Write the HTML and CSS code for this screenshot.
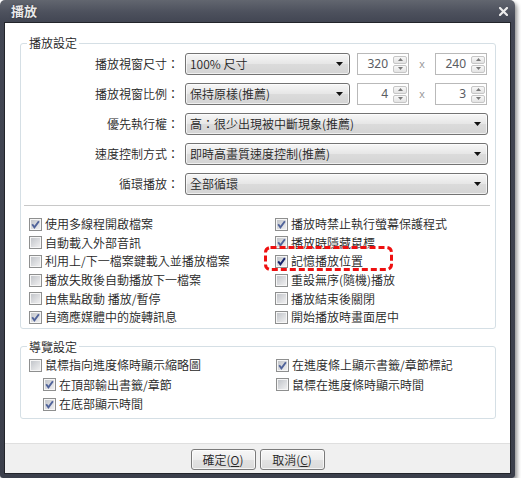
FILE: index.html
```html
<!DOCTYPE html>
<html lang="zh-Hant">
<head>
<meta charset="utf-8">
<title>播放</title>
<link rel="stylesheet" href="styles.css">
</head>
<body>
<svg class="defs" width="0" height="0" aria-hidden="true">
  <defs>
    <linearGradient id="cbfill" x1="0" y1="0" x2="1" y2="1">
      <stop offset="0" stop-color="#c2c5ca"/>
      <stop offset="1" stop-color="#efeff0"/>
    </linearGradient>
    <symbol id="cb-off" viewBox="0 0 13 13">
      <rect x="0.5" y="0.5" width="12" height="12" fill="#f6f6f6" stroke="#8e8f8f"/>
      <rect x="2" y="2" width="9" height="9" fill="url(#cbfill)"/>
    </symbol>
    <symbol id="cb-on" viewBox="0 0 13 13">
      <use href="#cb-off"/>
      <path d="M3.2 6.3 L5.4 9.3 L9.9 3.2" fill="none" stroke="#50639a" stroke-width="1.9"/>
    </symbol>
    <symbol id="cb-focus" viewBox="0 0 13 13">
      <use href="#cb-off"/>
      <path d="M3.2 6.3 L5.4 9.3 L9.9 3.2" fill="none" stroke="#17246c" stroke-width="2"/>
    </symbol>
    <symbol id="dd" viewBox="0 0 7 4">
      <path d="M0 0 H7 L3.5 4 Z" fill="#111"/>
    </symbol>
    <symbol id="up" viewBox="0 0 5 3">
      <path d="M0 3 H5 L2.5 0 Z" fill="#7a7a7a"/>
    </symbol>
    <symbol id="down" viewBox="0 0 5 3">
      <path d="M0 0 H5 L2.5 3 Z" fill="#7a7a7a"/>
    </symbol>
  </defs>
</svg>

<div class="window">
  <div class="titlebar">
    <span class="title">播放</span>
    <svg class="close" width="9" height="9" viewBox="0 0 9 9"><path d="M1 1 L8 8 M8 1 L1 8" stroke="#ececec" stroke-width="2.2" stroke-linecap="square"/></svg>
  </div>

  <div class="client">
    <fieldset class="group g1">
      <legend>播放設定</legend>
      <div class="form">
        <div class="frow">
          <span class="flabel">播放視窗尺寸：</span>
          <div class="fctl">
            <div class="combo short"><span>100% 尺寸</span><svg class="arrow"><use href="#dd"/></svg></div>
            <div class="spin first"><span class="num">320</span><span class="sbs"><span class="sb"><svg class="sa"><use href="#up"/></svg></span><span class="sb"><svg class="sa"><use href="#down"/></svg></span></span></div>
            <span class="times">x</span>
            <div class="spin"><span class="num">240</span><span class="sbs"><span class="sb"><svg class="sa"><use href="#up"/></svg></span><span class="sb"><svg class="sa"><use href="#down"/></svg></span></span></div>
          </div>
        </div>
        <div class="frow">
          <span class="flabel">播放視窗比例：</span>
          <div class="fctl">
            <div class="combo short"><span>保持原樣(推薦)</span><svg class="arrow"><use href="#dd"/></svg></div>
            <div class="spin first"><span class="num">4</span><span class="sbs"><span class="sb"><svg class="sa"><use href="#up"/></svg></span><span class="sb"><svg class="sa"><use href="#down"/></svg></span></span></div>
            <span class="times">x</span>
            <div class="spin"><span class="num">3</span><span class="sbs"><span class="sb"><svg class="sa"><use href="#up"/></svg></span><span class="sb"><svg class="sa"><use href="#down"/></svg></span></span></div>
          </div>
        </div>
        <div class="frow">
          <span class="flabel">優先執行權：</span>
          <div class="fctl"><div class="combo"><span>高：很少出現被中斷現象(推薦)</span><svg class="arrow"><use href="#dd"/></svg></div></div>
        </div>
        <div class="frow">
          <span class="flabel">速度控制方式：</span>
          <div class="fctl"><div class="combo"><span>即時高畫質速度控制(推薦)</span><svg class="arrow"><use href="#dd"/></svg></div></div>
        </div>
        <div class="frow">
          <span class="flabel">循環播放：</span>
          <div class="fctl"><div class="combo"><span>全部循環</span><svg class="arrow"><use href="#dd"/></svg></div></div>
        </div>
      </div>

      <div class="sep"></div>

      <div class="checks c1">
        <div class="chk"><svg class="cb"><use href="#cb-on"/></svg><span>使用多線程開啟檔案</span></div>
        <div class="chk"><svg class="cb"><use href="#cb-on"/></svg><span>播放時禁止執行螢幕保護程式</span></div>
        <div class="chk"><svg class="cb"><use href="#cb-off"/></svg><span>自動載入外部音訊</span></div>
        <div class="chk"><svg class="cb"><use href="#cb-on"/></svg><span>播放時隱藏鼠標</span></div>
        <div class="chk"><svg class="cb"><use href="#cb-off"/></svg><span>利用上/下一檔案鍵載入並播放檔案</span></div>
        <div class="chk marked"><svg class="cb"><use href="#cb-focus"/></svg><span>記憶播放位置</span>
          <svg class="ring" width="129" height="25" viewBox="0 0 129 25"><rect x="1.5" y="1.5" width="126" height="22" rx="5" fill="none" stroke="#ee1010" stroke-width="3" stroke-dasharray="6 3"/></svg>
        </div>
        <div class="chk"><svg class="cb"><use href="#cb-off"/></svg><span>播放失敗後自動播放下一檔案</span></div>
        <div class="chk"><svg class="cb"><use href="#cb-off"/></svg><span>重設無序(隨機)播放</span></div>
        <div class="chk"><svg class="cb"><use href="#cb-off"/></svg><span>由焦點啟動 播放/暫停</span></div>
        <div class="chk"><svg class="cb"><use href="#cb-off"/></svg><span>播放結束後關閉</span></div>
        <div class="chk"><svg class="cb"><use href="#cb-on"/></svg><span>自適應媒體中的旋轉訊息</span></div>
        <div class="chk"><svg class="cb"><use href="#cb-off"/></svg><span>開始播放時畫面居中</span></div>
      </div>
    </fieldset>

    <fieldset class="group g2">
      <legend>導覽設定</legend>
      <div class="checks c2">
        <div class="chk"><svg class="cb"><use href="#cb-off"/></svg><span>鼠標指向進度條時顯示縮略圖</span></div>
        <div class="chk"><svg class="cb"><use href="#cb-on"/></svg><span>在進度條上顯示書籤/章節標記</span></div>
        <div class="chk indent"><svg class="cb"><use href="#cb-on"/></svg><span>在頂部輸出書籤/章節</span></div>
        <div class="chk"><svg class="cb"><use href="#cb-off"/></svg><span>鼠標在進度條時顯示時間</span></div>
        <div class="chk indent"><svg class="cb"><use href="#cb-on"/></svg><span>在底部顯示時間</span></div>
      </div>
    </fieldset>

    <div class="footer">
      <button class="btn" type="button">確定(<u>O</u>)</button>
      <button class="btn" type="button">取消(<u>C</u>)</button>
    </div>
  </div>
</div>
</body>
</html>
```

FILE: styles.css
```css
html, body {
  margin: 0;
  padding: 0;
  background: #ffffff;
}

body {
  font-family: "Noto Sans CJK TC", "Noto Sans", sans-serif;
  font-size: 12px;
  font-weight: 350;
  color: #262626;
}

.defs {
  display: block;
  width: 0;
  height: 0;
  overflow: hidden;
}

.window {
  width: 515px;
  height: 478px;
  box-sizing: border-box;
  padding: 0 4px 4px 4px;
  display: flex;
  flex-direction: column;
  background: linear-gradient(#62666f 0px, #4d515d 12px, #424653 22px, #3b3f4b 100%);
  border-radius: 5px 5px 3px 3px;
  box-shadow: 2px 3px 4px rgba(0, 0, 0, 0.45);
}

.titlebar {
  height: 22px;
  flex: none;
  display: flex;
  align-items: center;
  justify-content: space-between;
  padding: 0 3px 0 7px;
}

.title {
  font-size: 13px;
  font-weight: bold;
  line-height: 16px;
  color: #e9e9ea;
  text-shadow: 0 0 2px rgba(0, 0, 0, 0.5);
}

.close {
  display: block;
}

.client {
  flex: 1;
  display: flex;
  flex-direction: column;
  background: #ffffff;
  border: 1px solid #22242a;
}

.group {
  margin: 0 14px 0 15px;
  padding: 0;
  min-width: 0;
  border: 1px solid #d5dfe5;
  border-radius: 3px;
}

.g1 {
  margin-top: 12px;
  padding-bottom: 1px;
}

.g2 {
  margin-top: 10px;
}

.group legend {
  margin-left: 6px;
  padding: 0 2px;
  line-height: 16px;
  font-size: 12px;
  color: #262626;
}

.form {
  padding: 2px 7px 0 0;
  display: flex;
  flex-direction: column;
  gap: 8px;
}

.frow {
  display: grid;
  grid-template-columns: 158px 1fr;
  column-gap: 6px;
  height: 22px;
  align-items: center;
}

.flabel {
  text-align: right;
  line-height: 16px;
  white-space: nowrap;
}

.fctl {
  display: flex;
  align-items: center;
  height: 22px;
}

.combo {
  flex: 1;
  height: 22px;
  box-sizing: border-box;
  display: flex;
  align-items: center;
  justify-content: space-between;
  padding: 0 6px 0 4px;
  border: 1px solid #737373;
  border-radius: 3px;
  background: linear-gradient(#f7f7f7, #e6e6e6 50%, #dbdbdb 52%, #d4d4d4);
  box-shadow: inset 0 0 0 1px rgba(255, 255, 255, 0.65);
  line-height: 16px;
  white-space: nowrap;
}

.combo.short {
  flex: 0 0 165px;
}

.arrow {
  width: 7px;
  height: 4px;
  flex: none;
}

.spin {
  width: 52px;
  height: 22px;
  box-sizing: border-box;
  flex: none;
  display: flex;
  align-items: center;
  justify-content: flex-end;
  gap: 5px;
  padding-right: 1px;
  border: 1px solid #b9b9b9;
  background: #ffffff;
}

.spin.first {
  margin-left: 7px;
}

.num {
  font-family: "Noto Sans", "Open Sans", sans-serif;
  font-size: 12px;
  font-weight: 400;
  line-height: 16px;
  color: #5a5c62;
}

.sbs {
  display: flex;
  flex-direction: column;
  gap: 1px;
}

.sb {
  width: 14px;
  height: 8px;
  box-sizing: border-box;
  display: flex;
  align-items: center;
  justify-content: center;
  border: 1px solid #c6c6c6;
  border-radius: 2px;
  background: linear-gradient(#f8f8f8, #e3e3e3);
}

.sa {
  width: 5px;
  height: 3px;
  display: block;
}

.times {
  width: 26px;
  flex: none;
  text-align: center;
  font-family: "Liberation Sans", sans-serif;
  font-size: 11px;
  color: #9a9a9a;
}

.sep {
  height: 1px;
  margin: 10px 5px 0 3px;
  background: #c8c8c8;
}

.checks {
  display: grid;
  padding-left: 8px;
}

.c1 {
  grid-template-columns: 246px 1fr;
  grid-auto-rows: 18.6px;
  margin-top: 9px;
}

.c2 {
  grid-template-columns: 247px 1fr;
  grid-auto-rows: 19.5px;
  margin-top: 1px;
  padding-bottom: 4px;
}

.chk {
  display: flex;
  align-items: center;
  gap: 3px;
  white-space: nowrap;
  line-height: 16px;
}

.chk.indent {
  padding-left: 14px;
}

.chk.marked {
  position: relative;
}

.ring {
  position: absolute;
  left: -11px;
  top: -6px;
}

.cb {
  width: 13px;
  height: 13px;
  flex: none;
  display: block;
}

.footer {
  margin-top: auto;
  height: 30px;
  box-sizing: border-box;
  display: flex;
  justify-content: center;
  align-items: flex-start;
  gap: 4px;
  padding-top: 5px;
  border-top: 1px solid #dfdfdf;
  background: #f0f0f0;
}

.btn {
  width: 65px;
  height: 21px;
  box-sizing: border-box;
  margin: 0;
  padding: 0;
  display: flex;
  align-items: center;
  justify-content: center;
  border: 1px solid #7a7a7a;
  border-radius: 3px;
  background: linear-gradient(#f7f7f7, #ededed 50%, #e2e2e2 52%, #dadada);
  box-shadow: inset 0 0 0 1px rgba(255, 255, 255, 0.7);
  font-family: "Noto Sans CJK TC", "Noto Sans", sans-serif;
  font-size: 12px;
  font-weight: 350;
  line-height: 16px;
  color: #262626;
}

.btn u {
  text-decoration: underline;
}
```
